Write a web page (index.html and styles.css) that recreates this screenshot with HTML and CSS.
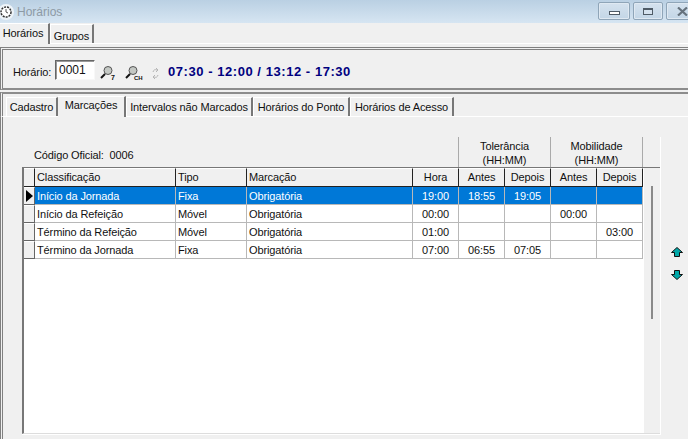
FILE: index.html
```html
<!DOCTYPE html>
<html lang="pt-BR">
<head>
  <meta charset="UTF-8">
  <title>Horários</title>
  <link rel="stylesheet" href="styles.css">
</head>
<body>
<div class="window">
  <div class="titlebar">
    <svg class="clock" width="16" height="18" viewBox="0 0 16 18">
      <circle cx="6" cy="9" r="8" fill="#eef4f9"/>
      <circle cx="6" cy="9" r="5" fill="#fff" stroke="#333" stroke-width="1.500" stroke-dasharray="2 1"/>
      <path d="M6 6v3l2 1" fill="none" stroke="#555"/>
    </svg>
    <span class="title">Horários</span>
    <div class="winbtns">
      <span class="winbtn"><i class="ico-min"></i></span>
      <span class="winbtn wide"><i class="ico-max"></i></span>
      <span class="winbtn close">
        <svg width="11" height="9" viewBox="0 0 11 9"><path d="M1 .5l9 8M10 .5l-9 8" stroke="#66727d" stroke-width="2.200" fill="none"/></svg>
      </span>
    </div>
  </div>

  <div class="tabs top">
    <span class="tab active">Horários</span>
    <span class="tab">Grupos</span>
  </div>

  <div class="toolbar">
    <label class="field">Horário:</label>
    <span class="input">0001</span>
    <svg class="lookup" width="16" height="14" viewBox="0 0 16 14">
      <circle cx="8" cy="4.500" r="4" fill="#c4c8c4" stroke="#555"/>
      <path d="M5 8l-4 4" stroke="#111" stroke-width="2"/>
      <text x="11" y="14" class="mini">7</text>
    </svg>
    <svg class="lookup second" width="18" height="14" viewBox="0 0 18 14">
      <circle cx="8" cy="4.500" r="4" fill="#c4c8c4" stroke="#555"/>
      <path d="M5 8l-4 4" stroke="#111" stroke-width="2"/>
      <text x="9" y="14" class="mini tiny">CH</text>
    </svg>
    <svg class="refresh" width="7" height="11" viewBox="0 0 7 11">
      <path d="M1 4a3 3 0 0 1 4-2M6 7a3 3 0 0 1-4 2M4 0l2 2-2 2M3 7L1 9l2 2" fill="none" stroke="#b5b5b5"/>
    </svg>
    <span class="times">07:30 - 12:00 / 13:12 - 17:30</span>
  </div>

  <div class="tabs sub">
    <span class="tab t1">Cadastro</span>
    <span class="tab active t2">Marcações</span>
    <span class="tab t3">Intervalos não Marcados</span>
    <span class="tab t4">Horários do Ponto</span>
    <span class="tab t5">Horários de Acesso</span>
  </div>

  <div class="page">
    <div class="content">
      <div class="above">
        <div class="codigo">Código Oficial:&nbsp; 0006</div>
        <div class="group">Tolerância<br>(HH:MM)</div>
        <div class="group">Mobilidade<br>(HH:MM)</div>
      </div>
      <div class="gridbox">
        <div class="grid">
          <div class="hd"></div><div class="hd">Classificação</div><div class="hd">Tipo</div><div class="hd">Marcação</div><div class="hd c">Hora</div><div class="hd c">Antes</div><div class="hd c">Depois</div><div class="hd c">Antes</div><div class="hd c">Depois</div>

          <div class="ind"><i class="arrow"></i></div><div class="sel">Início da Jornada</div><div class="sel">Fixa</div><div class="sel">Obrigatória</div><div class="sel c">19:00</div><div class="sel c">18:55</div><div class="sel c">19:05</div><div class="sel c"></div><div class="sel c"></div>

          <div class="ind"></div><div>Início da Refeição</div><div>Móvel</div><div>Obrigatória</div><div class="c">00:00</div><div class="c"></div><div class="c"></div><div class="c">00:00</div><div class="c"></div>

          <div class="ind"></div><div>Término da Refeição</div><div>Móvel</div><div>Obrigatória</div><div class="c">01:00</div><div class="c"></div><div class="c"></div><div class="c"></div><div class="c">03:00</div>

          <div class="ind"></div><div>Término da Jornada</div><div>Fixa</div><div>Obrigatória</div><div class="c">07:00</div><div class="c">06:55</div><div class="c">07:05</div><div class="c"></div><div class="c"></div>
        </div>
        <div class="scroll"><i class="thumb"></i></div>
      </div>
    </div>
    <div class="updown">
      <svg width="12" height="10" viewBox="0 0 12 10"><path d="M6 .5L11.500 5.500H8.500V9.500H3.500V5.500H.5z" fill="#00a8a8" stroke="#111"/></svg>
      <svg width="12" height="10" viewBox="0 0 12 10"><path d="M6 9.500L.5 4.500H3.500V.5H8.500V4.500H11.500z" fill="#00a8a8" stroke="#111"/></svg>
    </div>
  </div>
</div>
</body>
</html>
```

FILE: styles.css
```css
* {
  box-sizing: border-box;
  margin: 0;
  padding: 0;
}

html, body {
  width: 688px;
  height: 439px;
  overflow: hidden;
}

body {
  background: #f0f0f0;
  color: #111;
  font: 11px "Liberation Sans", Arial, sans-serif;
  letter-spacing: -.12px;
}

.window {
  height: 439px;
  display: flex;
  flex-direction: column;
}

.titlebar {
  height: 23px;
  display: flex;
  align-items: center;
  background: linear-gradient(#bad0e3, #d6e5f2);
}

.clock {
  margin-left: 0;
  margin-right: 1px;
}

.title {
  color: #8d9aa5;
  font-size: 12px;
  letter-spacing: 0;
}

.winbtns {
  margin-left: auto;
  margin-right: -10px;
  padding-top: 2px;
  align-self: flex-start;
  display: flex;
  gap: 3px;
}

.winbtn {
  width: 32px;
  height: 18px;
  display: flex;
  align-items: center;
  justify-content: center;
  border: 1px solid #8fa5b8;
  border-radius: 2px;
  background: linear-gradient(#d5e2ee, #c3d6e6);
  box-shadow: inset 0 0 0 1px #dfe9f2;
}

.wide {
  width: 30px;
}

.ico-min {
  width: 11px;
  height: 4px;
  margin-top: 4px;
  border: 1px solid #4f5b66;
  background: #fff;
}

.ico-max {
  width: 10px;
  height: 7px;
  border: 1px solid #4f5b66;
  border-top-width: 2px;
  background: #d5e2ee;
}

.close {
  justify-content: flex-start;
  padding-left: 10px;
}

.tabs {
  display: flex;
  align-items: flex-end;
  flex-shrink: 0;
}

.tabs.top {
  height: 21px;
  border-bottom: 1px solid #fff;
}

.tab {
  background: #f0f0f0;
  border-top: 1px solid #fff;
  border-left: 1px solid #fff;
  border-right: 2px solid #777;
  text-align: center;
  white-space: nowrap;
}

.tab.active {
  margin-bottom: -1px;
  border-left: 0;
}

.top .tab {
  width: 44px;
  height: 19px;
  padding-top: 5px;
}

.top .tab.active {
  width: 50px;
  height: 21px;
  padding: 3px 2px 0 0;
}

.toolbar {
  height: 43px;
  margin-top: 3px;
  padding: 5px 0 0 10px;
  display: flex;
  align-items: center;
  border-top: 3px double #808080;
  border-left: 3px double #808080;
  border-bottom: 2px solid #8c8c8c;
  flex-shrink: 0;
}

.field {
  width: 42px;
}

.input {
  width: 40px;
  height: 20px;
  padding: 2px 3px;
  margin-top: -3px;
  font-size: 12px;
  letter-spacing: 0;
  background: #fff;
  border: 1px solid #666;
  border-right-color: #f8f8f8;
  border-bottom-color: #f8f8f8;
  box-shadow: inset 1px 1px 0 #999;
}

.lookup {
  margin-left: 5px;
  margin-top: 3px;
}

.second {
  margin-left: 9px;
  margin-right: -1px;
}

.mini {
  font-size: 7px;
  font-weight: bold;
  fill: #111;
}

.tiny {
  font-size: 6px;
}

.refresh {
  margin-left: 10px;
  margin-top: 3px;
}

.times {
  margin-left: 9px;
  color: #00007f;
  font-size: 13px;
  font-weight: bold;
  letter-spacing: .55px;
}

.tabs.sub {
  height: 25px;
  margin-top: 2px;
  padding-left: 3px;
  border-top: 2px solid #8c8c8c;
  border-left: 3px double #808080;
  border-bottom: 1px solid #fff;
}

.sub .tab {
  height: 19px;
  padding-top: 3px;
}

.sub .tab.active {
  height: 21px;
  padding-top: 2px;
}

.t1 { width: 52px; }
.t2 { width: 68px; }
.t3 { width: 127px; }
.t4 { width: 97px; }
.t5 { width: 104px; }

.page {
  flex: 1;
  display: flex;
  padding: 20px 0 0 19px;
  border-left: 3px double #808080;
}

.content {
  width: 639px;
  height: 298px;
  display: flex;
  flex-direction: column;
  border-right: 1px solid #fff;
  border-bottom: 1px solid #fff;
}

.above {
  height: 30px;
  display: flex;
  padding-right: 17px;
}

.codigo {
  flex: 1;
  padding: 12px 0 0 12px;
}

.group {
  width: 92px;
  padding-top: 2px;
  text-align: center;
  line-height: 14px;
  border-left: 1px solid #aaa;
}

.group:last-child {
  width: 93px;
  border-right: 1px solid #aaa;
}

.gridbox {
  flex: 1;
  display: flex;
  border-top: 1px solid #777;
  border-left: 2px solid #777;
  border-bottom: 1px solid #ddd;
}

.grid {
  width: 620px;
  background: #fff;
  display: grid;
  grid-template-columns: 11px 141px 71px 166px 46px 46px 46px 46px 46px;
  grid-template-rows: 19px;
  grid-auto-rows: 18px;
  align-content: start;
}

.grid div {
  padding: 3px 0 0 2px;
  border-right: 1px solid #b8b8b8;
  border-bottom: 1px solid #b8b8b8;
  white-space: nowrap;
}

.grid .c {
  padding-left: 0;
  text-align: center;
}

.grid .hd {
  padding-top: 2px;
  background: #f0f0f0;
  border-top: 1px solid #fff;
  border-right: 1px solid #222;
  border-bottom: 1px solid #222;
}

.grid .sel {
  background: #0078d7;
  color: #fff;
}

.grid .ind {
  padding: 0;
  background: #f0f0f0;
  border-top: 1px solid #fff;
  border-right: 1px solid #666;
  border-bottom: 1px solid #666;
  display: flex;
  align-items: center;
  justify-content: center;
}

.arrow {
  border-left: 7px solid #000;
  border-top: 6px solid transparent;
  border-bottom: 6px solid transparent;
}

.scroll {
  flex: 1;
  padding: 18px 0 0 7px;
}

.thumb {
  display: block;
  width: 2px;
  height: 133px;
  background: #8a8a8a;
}

.updown {
  margin-left: 10px;
  padding-top: 110px;
  display: flex;
  flex-direction: column;
  gap: 13px;
}
```
